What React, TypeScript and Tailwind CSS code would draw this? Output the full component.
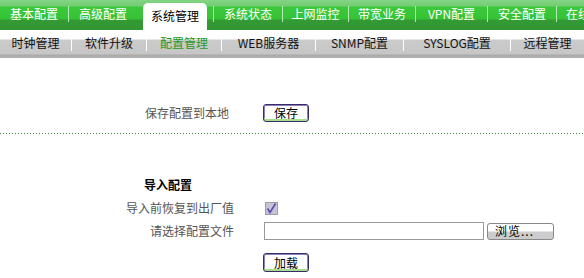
import React from 'react';

const TopTab: React.FC<{ label: string; w: string }> = ({ label, w }) => (
  <div className={`${w} shrink-0 flex items-center justify-center text-white text-[12px] leading-none pb-[2px]`}>{label}</div>
);

const TopSep = () => <div className="w-px shrink-0 h-[16px] self-center mt-[-2px] bg-[#b8e8b8]" />;

const SubTab: React.FC<{ label: string; w: string; active?: boolean }> = ({ label, w, active }) => (
  <div className={`${w} shrink-0 flex items-center justify-center text-[12px] leading-none pb-[2px] ${active ? 'text-[#1d9a1d]' : 'text-[#111]'}`}>{label}</div>
);

const SubSep = () => <div className="w-px shrink-0 h-[14px] self-center bg-white" />;

const PurpleButton: React.FC<{ label: string; h: string }> = ({ label, h }) => (
  <button className={`w-[46px] ${h} bg-white border border-[#3a2a6a] rounded-[3px] shadow-[inset_0_-2px_0_#a6de8c,inset_0_0_0_1px_#8c80b8] text-[12px] leading-none text-black flex items-center justify-center`}>
    {label}
  </button>
);

export default function App() {
  return (
    <div className="w-[584px] h-[278px] bg-white overflow-hidden font-['Noto_Sans_CJK_SC','Liberation_Sans',sans-serif]">
      {/* main menu */}
      <div className="h-[30px] flex overflow-hidden bg-[linear-gradient(to_bottom,#84d484_0px,#70cd70_6px,#3cc83c_7px,#35c235_19px,#349a34_20px,#329632_30px)]">
        <TopTab label="基本配置" w="w-[68px]" />
        <TopSep />
        <TopTab label="高级配置" w="w-[68px]" />
        <div className="w-[6px] shrink-0" />
        <div className="w-[64px] shrink-0 mt-[3px] bg-white rounded-t-[5px] flex items-center justify-center text-[12px] leading-none text-black pb-[1px]">
          系统管理
        </div>
        <div className="w-[6px] shrink-0" />
        <TopSep />
        <TopTab label="系统状态" w="w-[68px]" />
        <TopSep />
        <TopTab label="上网监控" w="w-[65px]" />
        <TopSep />
        <TopTab label="带宽业务" w="w-[66px]" />
        <TopSep />
        <TopTab label="VPN配置" w="w-[71px]" />
        <TopSep />
        <TopTab label="安全配置" w="w-[68px]" />
        <TopSep />
        <div className="shrink-0 pl-[9px] flex items-center text-white text-[12px] leading-none pb-[2px] whitespace-nowrap">在线用户</div>
      </div>

      {/* sub menu */}
      <div className="h-[28px] flex overflow-hidden bg-[linear-gradient(to_bottom,#ffffff_0px,#ffffff_9px,#cbcbcb_10px,#c6c6c6_24px,#a9a9a9_25px,#b4b4b4_28px)]">
        <SubTab label="时钟管理" w="w-[71px]" />
        <SubSep />
        <SubTab label="软件升级" w="w-[74px]" />
        <SubSep />
        <SubTab label="配置管理" w="w-[74px]" active />
        <SubSep />
        <SubTab label="WEB服务器" w="w-[93px]" />
        <SubSep />
        <SubTab label="SNMP配置" w="w-[87px]" />
        <SubSep />
        <SubTab label="SYSLOG配置" w="w-[106px]" />
        <SubSep />
        <SubTab label="远程管理" w="w-[73px]" />
      </div>

      {/* save to local */}
      <div className="mt-[46px] h-[18px] flex items-center">
        <div className="w-[229px] text-right text-[12px] leading-none text-[#555]">保存配置到本地</div>
        <div className="ml-[34px]">
          <PurpleButton label="保存" h="h-[18px]" />
        </div>
      </div>

      <div className="mt-[11px] h-px bg-[repeating-linear-gradient(to_right,#3c8c3c_0px,#3c8c3c_1px,transparent_1px,transparent_3px)]" />

      {/* import */}
      <div className="mt-[43px] h-[16px] pl-[144px] flex items-center text-[12px] leading-none font-bold text-black">导入配置</div>

      <div className="mt-[7px] h-[16px] flex items-center">
        <div className="w-[234px] text-right text-[12px] leading-none text-[#555]">导入前恢复到出厂值</div>
        <div className="ml-[31px] w-[13px] h-[13px] border border-[#9a9aa8] bg-[#c4c4d2] flex items-center justify-center">
          <svg width="11" height="11" viewBox="0 0 11 11">
            <path d="M1.5 5.5 L4 9.5 L9.5 0.5" fill="none" stroke="#5a48b0" strokeWidth="1.6" />
          </svg>
        </div>
      </div>

      <div className="mt-[6px] h-[18px] flex items-center">
        <div className="w-[234px] text-right text-[12px] leading-none text-[#555]">请选择配置文件</div>
        <div className="ml-[30px] w-[220px] h-[18px] border border-[#999] bg-white" />
        <button className="ml-[3px] w-[67px] h-[17px] border border-[#888] rounded-[3px] bg-[linear-gradient(to_bottom,#ffffff_0px,#ffffff_7px,#cccccc_8px,#cccccc_17px)] text-[12px] leading-none text-black flex items-center pl-[7px] tracking-[1px]">
          浏览...
        </button>
      </div>

      <div className="mt-[13px] pl-[263px]">
        <PurpleButton label="加载" h="h-[19px]" />
      </div>
    </div>
  );
}
